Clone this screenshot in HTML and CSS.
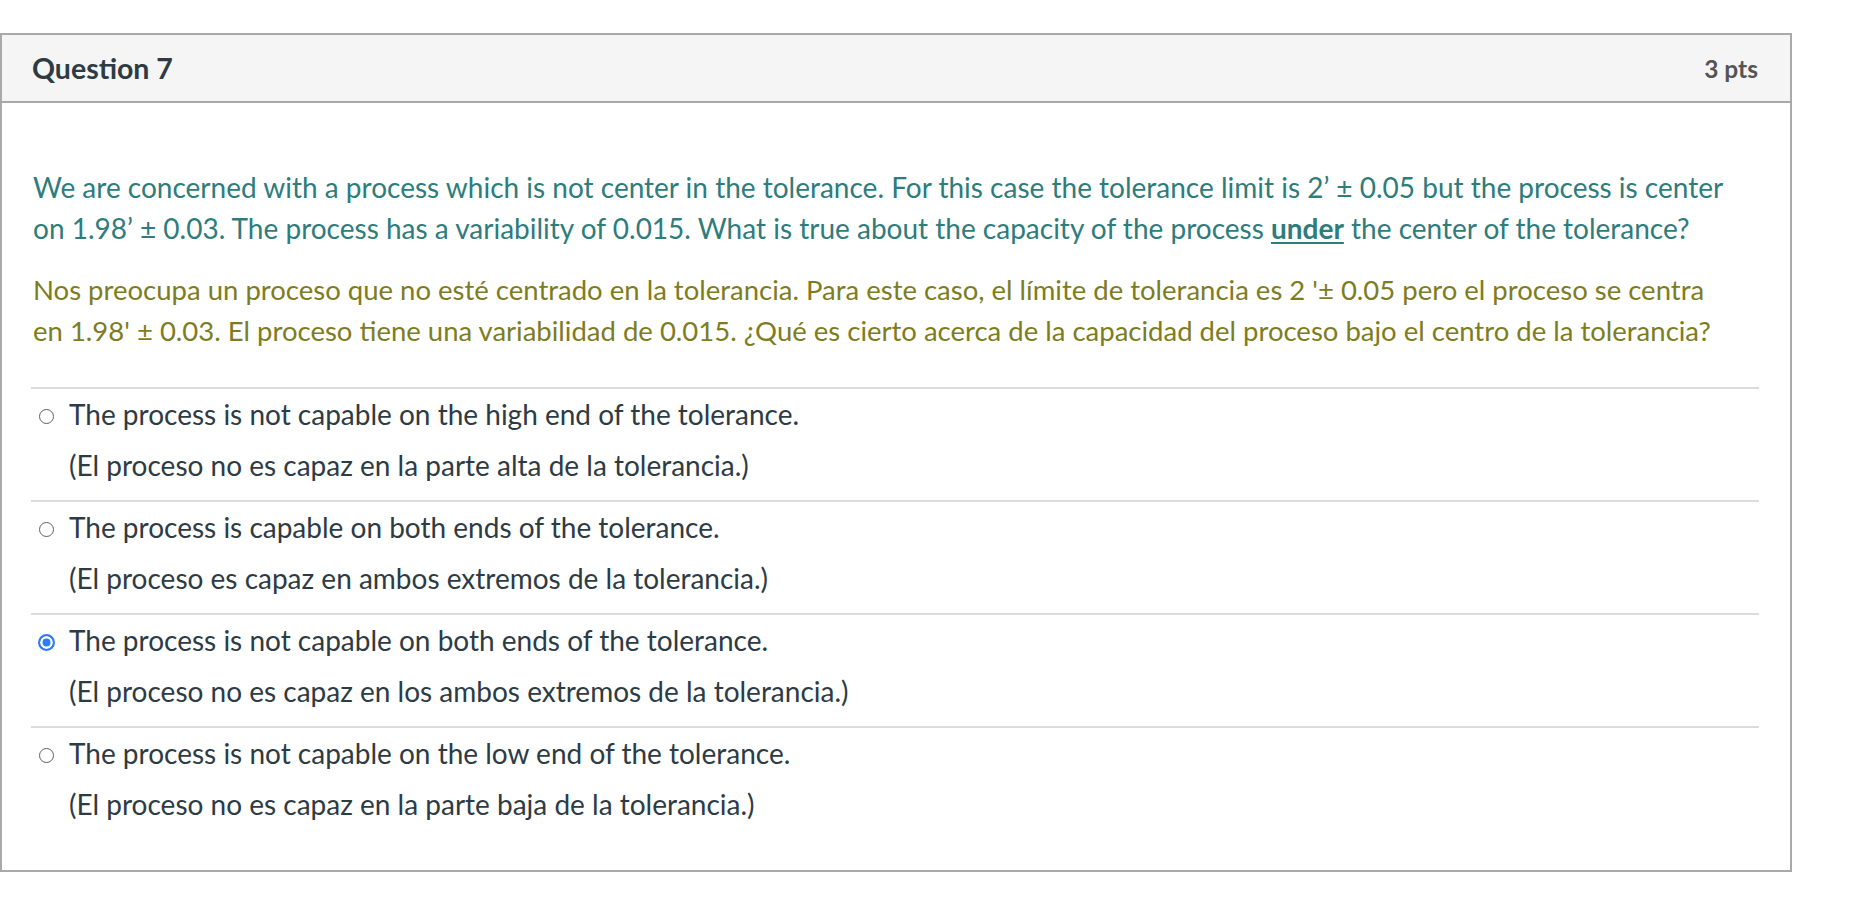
FILE: index.html
```html
<!DOCTYPE html>
<html lang="en">
<head>
<meta charset="utf-8">
<title>Question 7</title>
<link rel="stylesheet" href="styles.css">
</head>
<body>
<div class="question">
  <div class="q-header">
    <h2 class="q-title">Question 7</h2>
    <span class="q-points">3 pts</span>
  </div>
  <div class="q-body">
    <div class="q-text">
      <p class="en">We are concerned with a process which is not center in the tolerance. For this case the tolerance limit is 2’ ± 0.05 but the process is center on 1.98’ ± 0.03. The process has a variability of 0.015. What is true about the capacity of the process <strong class="ul">under</strong> the center of the tolerance?</p>
      <p class="es">Nos preocupa un proceso que no esté centrado en la tolerancia. Para este caso, el límite de tolerancia es 2 '± 0.05 pero el proceso se centra en 1.98' ± 0.03. El proceso tiene una variabilidad de 0.015. ¿Qué es cierto acerca de la capacidad del proceso bajo el centro de la tolerancia?</p>
    </div>
    <div class="answers">
      <div class="answer">
        <span class="radio"></span>
        <div class="answer-text">
          <p>The process is not capable on the high end of the tolerance.</p>
          <p>(El proceso no es capaz en la parte alta de la tolerancia.)</p>
        </div>
      </div>
      <div class="answer">
        <span class="radio"></span>
        <div class="answer-text">
          <p>The process is capable on both ends of the tolerance.</p>
          <p>(El proceso es capaz en ambos extremos de la tolerancia.)</p>
        </div>
      </div>
      <div class="answer">
        <span class="radio checked"></span>
        <div class="answer-text">
          <p>The process is not capable on both ends of the tolerance.</p>
          <p>(El proceso no es capaz en los ambos extremos de la tolerancia.)</p>
        </div>
      </div>
      <div class="answer">
        <span class="radio"></span>
        <div class="answer-text">
          <p>The process is not capable on the low end of the tolerance.</p>
          <p>(El proceso no es capaz en la parte baja de la tolerancia.)</p>
        </div>
      </div>
    </div>
  </div>
</div>
</body>
</html>
```

FILE: styles.css
```css
html, body {
  margin: 0;
  padding: 0;
  background: #ffffff;
}

body {
  font-family: Lato, "Open Sans", "Liberation Sans", sans-serif;
  color: #2d3b45;
  padding-top: 33px;
}

.question {
  width: 1792px;
  box-sizing: border-box;
  border: 2px solid #a9a9a9;
  background: #ffffff;
}

.q-header {
  display: flex;
  align-items: center;
  justify-content: space-between;
  height: 66px;
  padding: 0 32px 0 30px;
  background: #f5f5f5;
  border-bottom: 2px solid #a9a9a9;
}

.q-title {
  margin: 0;
  font-size: 28.5px;
  font-weight: 700;
  color: #2d3b45;
}

.q-points {
  font-size: 24.5px;
  font-weight: 700;
  color: #555555;
}

.q-body {
  padding: 64px 31px 45px 29px;
}

.q-text {
  padding: 0 20px 0 2px;
}

.q-text p {
  margin: 0;
  font-size: 28px;
  line-height: 41px;
}

.q-text p + p {
  margin-top: 20px;
}

.q-text .en {
  color: #2e7c7c;
}

.q-text .es {
  color: #7d7d1f;
  font-size: 27.5px;
}

.ul {
  font-weight: 700;
  text-decoration: underline;
  text-underline-offset: 3px;
}

.answers {
  margin-top: 36px;
}

.answer {
  display: flex;
  align-items: flex-start;
  border-top: 2px solid #dcdcdc;
  padding: 5px 0 14px 0;
}

.answer:last-child {
  padding-bottom: 0;
}

.radio {
  flex: none;
  box-sizing: border-box;
  width: 15px;
  height: 15px;
  margin: 15px 15px 0 8px;
  border: 1.5px solid #5f5f5f;
  border-radius: 50%;
  background: #ffffff;
}

.radio.checked {
  width: 17px;
  height: 17px;
  margin: 14px 14px 0 7px;
  border: 2.5px solid #2f7cf6;
  box-shadow: inset 0 0 0 2.5px #ffffff;
  background: #2f7cf6;
}

.answer-text p {
  margin: 0;
  font-size: 28px;
  line-height: 41px;
  color: #2d3b45;
}

.answer-text p + p {
  margin-top: 10px;
}
```
